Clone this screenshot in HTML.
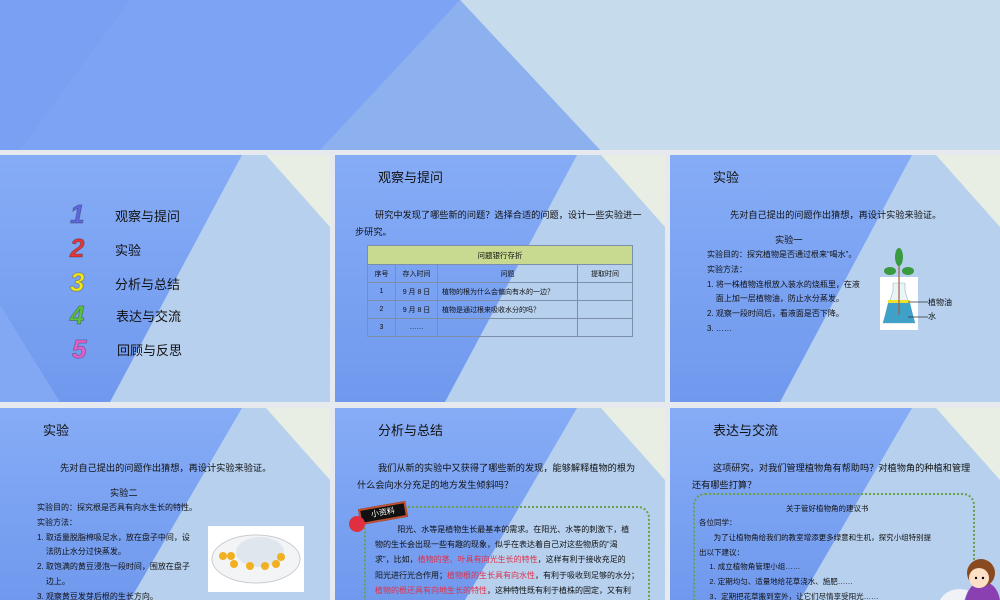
<!DOCTYPE html>
<html><head><meta charset="utf-8"><style>
*{margin:0;padding:0;box-sizing:border-box}
body{width:1000px;height:600px;overflow:hidden;background:#e6eaee;position:relative;font-family:"Liberation Sans","Noto Sans CJK SC",sans-serif;color:#111}
.s{position:absolute;overflow:hidden}
.s>svg.bg{position:absolute;left:0;top:0}
.t{position:absolute;white-space:nowrap}
.h{font-size:13px}
.b{font-size:9.2px}
.r{color:#e0304a}
.n{position:absolute;font:bold 26px "Liberation Sans",sans-serif;font-style:italic;-webkit-text-stroke:1px rgba(0,0,0,.25)}
table{border-collapse:collapse;position:absolute;font-size:7px}
td{border:1px solid #7d8fa8;text-align:center;height:18px}
</style></head><body>

<div class="s" style="left:0;top:0;width:1000px;height:150px">
<svg class="bg" width="1000" height="150"><rect width="1000" height="150" fill="#c6dbec"/>
<polygon points="0,0 460,0 600,150 0,150" fill="#7da3f4"/>
<polygon points="460,0 600,150 320,150" fill="#8db0ef"/>
<polygon points="0,0 130,0 20,150 0,150" fill="#79a0f3"/></svg>
</div>

<div class="s" style="left:0;top:155px;width:330px;height:247px">
<svg class="bg" width="330" height="247"><defs><linearGradient id="g" x1="0" y1="0" x2="0" y2="1"><stop offset="0" stop-color="#86acf6"/><stop offset="1" stop-color="#7099ee"/></linearGradient></defs>
<rect width="330" height="247" fill="url(#g)"/><polygon points="242,0 330,0 330,247 110,247" fill="#b6d0ee"/><polygon points="266,0 330,0 330,72" fill="#e8eee4"/><polygon points="0,150 60,247 0,247" fill="#82a8f3"/></svg>
<div class="n" style="left:70px;top:44px;color:#6068dc">1</div>
<div class="n" style="left:70px;top:78px;color:#e53737">2</div>
<div class="n" style="left:70px;top:112px;color:#f2e61e">3</div>
<div class="n" style="left:70px;top:145px;color:#5cc040">4</div>
<div class="n" style="left:72px;top:179px;color:#e860c8">5</div>
<div class="t h" style="left:115px;top:51px">观察与提问</div>
<div class="t h" style="left:115px;top:85px">实验</div>
<div class="t h" style="left:115px;top:119px">分析与总结</div>
<div class="t h" style="left:116px;top:151px">表达与交流</div>
<div class="t h" style="left:117px;top:185px">回顾与反思</div>
</div>

<div class="s" style="left:335px;top:155px;width:330px;height:247px">
<svg class="bg" width="330" height="247"><rect width="330" height="247" fill="url(#g)"/><polygon points="242,0 330,0 330,247 110,247" fill="#b6d0ee"/><polygon points="266,0 330,0 330,72" fill="#e8eee4"/></svg>
<div class="t h" style="left:43px;top:12px">观察与提问</div>
<div class="t b" style="left:40px;top:52px">研究中发现了哪些新的问题？选择合适的问题，设计一些实验进一</div>
<div class="t b" style="left:20px;top:69px">步研究。</div>
<table style="left:32px;top:90px;width:266px">
<tr><td colspan="4" style="background:#c7da8f;height:19px;font-size:7.5px">问题银行存折</td></tr>
<tr><td style="width:28px">序号</td><td style="width:42px">存入时间</td><td style="width:140px">问题</td><td>提取时间</td></tr>
<tr><td>1</td><td>9 月 8 日</td><td style="text-align:left;padding-left:4px">植物的根为什么会偏向有水的一边？</td><td></td></tr>
<tr><td>2</td><td>9 月 8 日</td><td style="text-align:left;padding-left:4px">植物是通过根来吸收水分的吗？</td><td></td></tr>
<tr><td>3</td><td>……</td><td></td><td></td></tr>
</table>
</div>

<div class="s" style="left:670px;top:155px;width:330px;height:247px">
<svg class="bg" width="330" height="247"><rect width="330" height="247" fill="url(#g)"/><polygon points="242,0 330,0 330,247 110,247" fill="#b6d0ee"/><polygon points="266,0 330,0 330,72" fill="#e8eee4"/></svg>
<div class="t h" style="left:43px;top:12px">实验</div>
<div class="t b" style="left:60px;top:52px">先对自己提出的问题作出猜想，再设计实验来验证。</div>
<div class="t b" style="left:105px;top:77px">实验一</div>
<div class="t" style="left:37px;top:93px;font-size:8px;line-height:14.8px">实验目的：探究植物是否通过根来“喝水”。<br>实验方法：<br>1. 将一株植物连根放入装水的烧瓶里，在液<br>&nbsp;&nbsp;&nbsp;&nbsp;面上加一层植物油，防止水分蒸发。<br>2. 观察一段时间后，看液面是否下降。<br>3. ……</div>
<svg style="position:absolute;left:208px;top:92px" width="60" height="85">
<rect x="2" y="30" width="38" height="53" fill="#fff"/>
<path d="M15 36 h12 v8 l10 32 h-32 l10 -32z" fill="#e8f4f8" stroke="#9bb" stroke-width=".6"/>
<path d="M10 56 h22 l5 20 h-32z" fill="#3fa0c8"/>
<rect x="10" y="53" width="22" height="3" fill="#f0e030"/>
<line x1="21" y1="8" x2="21" y2="68" stroke="#a06040" stroke-width="1.2"/>
<ellipse cx="21" cy="10" rx="4" ry="9" fill="#3a9a40"/><ellipse cx="12" cy="24" rx="6" ry="4" fill="#3a9a40"/><ellipse cx="30" cy="24" rx="6" ry="4" fill="#3a9a40"/>
<line x1="30" y1="55" x2="50" y2="55" stroke="#333" stroke-width=".7"/><line x1="30" y1="70" x2="50" y2="70" stroke="#333" stroke-width=".7"/></svg>
<div class="t" style="left:258px;top:142px;font-size:8px">植物油</div>
<div class="t" style="left:258px;top:156px;font-size:8px">水</div>
</div>

<div class="s" style="left:0;top:408px;width:330px;height:192px">
<svg class="bg" width="330" height="192"><rect width="330" height="192" fill="url(#g)"/><polygon points="242,0 330,0 330,192 130,192" fill="#b6d0ee"/><polygon points="266,0 330,0 330,72" fill="#e8eee4"/></svg>
<div class="t h" style="left:43px;top:12px">实验</div>
<div class="t b" style="left:60px;top:52px">先对自己提出的问题作出猜想，再设计实验来验证。</div>
<div class="t b" style="left:110px;top:77px">实验二</div>
<div class="t" style="left:37px;top:93px;font-size:8px;line-height:14.8px">实验目的：探究根是否具有向水生长的特性。<br>实验方法：<br>1. 取适量脱脂棉吸足水，放在盘子中间，设<br>&nbsp;&nbsp;&nbsp;&nbsp;法防止水分过快蒸发。<br>2. 取饱满的黄豆浸泡一段时间，围放在盘子<br>&nbsp;&nbsp;&nbsp;&nbsp;边上。<br>3. 观察黄豆发芽后根的生长方向。</div>
<svg style="position:absolute;left:208px;top:118px" width="96" height="66"><rect width="96" height="66" fill="#fff"/>
<ellipse cx="48" cy="33" rx="44" ry="24" fill="#f2f4f6" stroke="#c8ccd0"/><ellipse cx="52" cy="26" rx="24" ry="15" fill="#dfe6ee"/>
<g fill="#f0b020"><circle cx="15" cy="30" r="4"/><circle cx="23" cy="30" r="4"/><circle cx="26" cy="38" r="4"/><circle cx="42" cy="40" r="4"/><circle cx="57" cy="40" r="4"/><circle cx="68" cy="38" r="4"/><circle cx="73" cy="31" r="4"/></g></svg>
</div>

<div class="s" style="left:335px;top:408px;width:330px;height:192px">
<svg class="bg" width="330" height="192"><rect width="330" height="192" fill="url(#g)"/><polygon points="242,0 330,0 330,192 130,192" fill="#b6d0ee"/><polygon points="266,0 330,0 330,72" fill="#e8eee4"/></svg>
<div class="t h" style="left:43px;top:12px">分析与总结</div>
<div class="t b" style="left:43px;top:52px">我们从新的实验中又获得了哪些新的发现，能够解释植物的根为</div>
<div class="t b" style="left:22px;top:69px">什么会向水分充足的地方发生倾斜吗？</div>
<div style="position:absolute;left:29px;top:98px;width:286px;height:110px;border:2px dotted #6aa048;border-radius:12px"></div>
<div style="position:absolute;left:24px;top:97px;width:48px;height:16px;background:#111;border:2px solid #c05030;transform:rotate(-10deg);color:#fff;font-size:8px;text-align:center;line-height:12px">小资料</div>
<div style="position:absolute;left:14px;top:108px;width:16px;height:16px;border-radius:50%;background:#e03040"></div>
<div class="t" style="left:40px;top:114px;font-size:8px;line-height:15.2px">&nbsp;&nbsp;&nbsp;&nbsp;&nbsp;&nbsp;&nbsp;&nbsp;&nbsp;&nbsp;阳光、水等是植物生长最基本的需求。在阳光、水等的刺激下，植<br>物的生长会出现一些有趣的现象，似乎在表达着自己对这些物质的“渴<br>求”，比如，<span class="r">植物的茎、叶具有向光生长的特性</span>，这样有利于接收充足的<br>阳光进行光合作用；<span class="r">植物根的生长具有向水性</span>，有利于吸收到足够的水分；<br><span class="r">植物的根还具有向地生长的特性</span>，这种特性既有利于植株的固定，又有利</div>
</div>

<div class="s" style="left:670px;top:408px;width:330px;height:192px">
<svg class="bg" width="330" height="192"><rect width="330" height="192" fill="url(#g)"/><polygon points="242,0 330,0 330,192 130,192" fill="#b6d0ee"/><polygon points="266,0 330,0 330,72" fill="#e8eee4"/></svg>
<div class="t h" style="left:43px;top:12px">表达与交流</div>
<div class="t b" style="left:43px;top:52px">这项研究，对我们管理植物角有帮助吗？对植物角的种植和管理</div>
<div class="t b" style="left:22px;top:69px">还有哪些打算？</div>
<div style="position:absolute;left:23px;top:85px;width:282px;height:130px;border:2px dotted #6aa048;border-radius:12px"></div>
<div class="t" style="left:116px;top:95px;font-size:7.5px">关于管好植物角的建议书</div>
<div class="t" style="left:29px;top:108px;font-size:7.5px;line-height:14.8px">各位同学：<br>&nbsp;&nbsp;&nbsp;&nbsp;&nbsp;&nbsp;&nbsp;为了让植物角给我们的教室增添更多绿意和生机，探究小组特别提<br>出以下建议：<br>&nbsp;&nbsp;&nbsp;&nbsp;&nbsp;1. 成立植物角管理小组……<br>&nbsp;&nbsp;&nbsp;&nbsp;&nbsp;2. 定期均匀、适量地给花草浇水、施肥……<br>&nbsp;&nbsp;&nbsp;&nbsp;&nbsp;3．定期把花草搬到室外，让它们尽情享受阳光……</div>
<svg style="position:absolute;left:265px;top:148px" width="65" height="44">
<path d="M30 44 q5 -20 20 -18 q12 2 15 18z" fill="#8a40b0"/>
<path d="M5 44 q8 -14 28 -10 l-4 10z" fill="#f0f2f6"/>
<circle cx="46" cy="17" r="14" fill="#8a4a20"/><ellipse cx="44" cy="22" rx="10" ry="10" fill="#fde0c8"/>
<circle cx="41" cy="22" r="1.2" fill="#000"/><circle cx="48" cy="22" r="1.2" fill="#000"/></svg>
</div>
</body></html>
